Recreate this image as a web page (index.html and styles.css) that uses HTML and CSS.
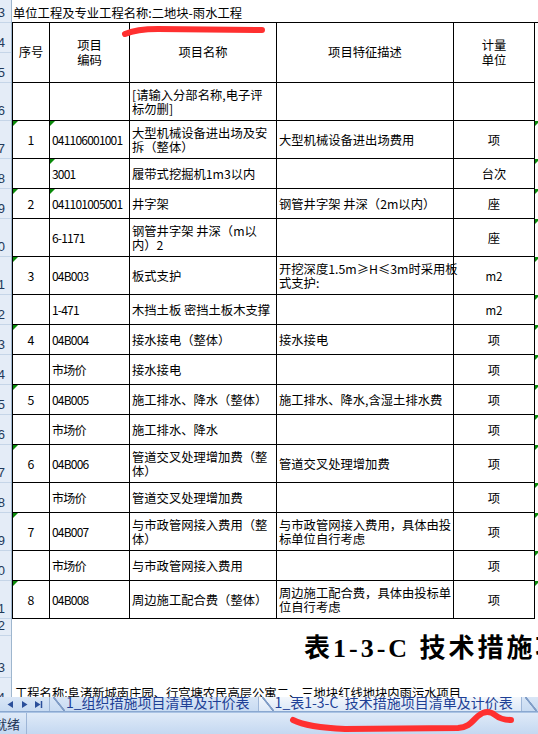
FILE: index.html
```html
<!DOCTYPE html>
<html lang="zh-CN">
<head>
<meta charset="utf-8">
<title>表1-3-C 技术措施项目清单及计价表</title>
<link rel="stylesheet" href="styles.css">
</head>
<body>
<div class="app">
  <div class="sheet">
    <div class="rowhdr">
      <div class="rh h23"><span>3</span></div>
      <div class="rh h30"><span>4</span></div>
      <div class="rh h30"><span>5</span></div>
      <div class="rh h38"><span>6</span></div>
      <div class="rh h38"><span>7</span></div>
      <div class="rh h30"><span>8</span></div>
      <div class="rh h30"><span>9</span></div>
      <div class="rh h38"><span>10</span></div>
      <div class="rh h38"><span>11</span></div>
      <div class="rh h30"><span>12</span></div>
      <div class="rh h30"><span>13</span></div>
      <div class="rh h30"><span>14</span></div>
      <div class="rh h30"><span>15</span></div>
      <div class="rh h30"><span>16</span></div>
      <div class="rh h38"><span>17</span></div>
      <div class="rh h30"><span>18</span></div>
      <div class="rh h38"><span>19</span></div>
      <div class="rh h30"><span>20</span></div>
      <div class="rh h38"><span>21</span></div>
      <div class="rh h17"><span>22</span></div>
      <div class="rh h42"><span>23</span></div>
      <div class="rh h30"><span>24</span></div>
    </div>
    <div class="main">
      <div class="title">单位工程及专业工程名称:二地块-雨水工程</div>
      <div class="grid">
        <div class="c hd">序号</div>
        <div class="c hd">项目<br>编码</div>
        <div class="c hd">项目名称</div>
        <div class="c hd">项目特征描述</div>
        <div class="c hd">计量<br>单位</div>
        <div class="f"></div>

        <div class="c r38"></div>
        <div class="c code"></div>
        <div class="c txt">[请输入分部名称,电子评<br>标勿删]</div>
        <div class="c txt"></div>
        <div class="c unit"></div>
        <div class="f"></div>

        <div class="c r38 seq tri">1</div>
        <div class="c code tri">041106001001</div>
        <div class="c txt">大型机械设备进出场及安<br>拆（整体）</div>
        <div class="c txt">大型机械设备进出场费用</div>
        <div class="c unit">项</div>
        <div class="f tri"></div>

        <div class="c r30"></div>
        <div class="c code tri">3001</div>
        <div class="c txt">履带式挖掘机1m3以内</div>
        <div class="c txt"></div>
        <div class="c unit">台次</div>
        <div class="f tri"></div>

        <div class="c r30 seq tri">2</div>
        <div class="c code tri">041101005001</div>
        <div class="c txt">井字架</div>
        <div class="c txt">钢管井字架 井深（2m以内）</div>
        <div class="c unit">座</div>
        <div class="f tri"></div>

        <div class="c r38"></div>
        <div class="c code">6-1171</div>
        <div class="c txt">钢管井字架 井深（m以<br>内）2</div>
        <div class="c txt"></div>
        <div class="c unit">座</div>
        <div class="f tri"></div>

        <div class="c r38 seq tri">3</div>
        <div class="c code">04B003</div>
        <div class="c txt">板式支护</div>
        <div class="c txt">开挖深度1.5m≥H≤3m时采用板<br>式支护:</div>
        <div class="c unit sm">m2</div>
        <div class="f tri"></div>

        <div class="c r30"></div>
        <div class="c code">1-471</div>
        <div class="c txt">木挡土板 密挡土板木支撑</div>
        <div class="c txt"></div>
        <div class="c unit sm">m2</div>
        <div class="f tri"></div>

        <div class="c r30 seq tri">4</div>
        <div class="c code">04B004</div>
        <div class="c txt">接水接电（整体）</div>
        <div class="c txt">接水接电</div>
        <div class="c unit">项</div>
        <div class="f tri"></div>

        <div class="c r30"></div>
        <div class="c code">市场价</div>
        <div class="c txt">接水接电</div>
        <div class="c txt"></div>
        <div class="c unit">项</div>
        <div class="f tri"></div>

        <div class="c r30 seq tri">5</div>
        <div class="c code">04B005</div>
        <div class="c txt">施工排水、降水（整体）</div>
        <div class="c txt">施工排水、降水,含湿土排水费</div>
        <div class="c unit">项</div>
        <div class="f tri"></div>

        <div class="c r30"></div>
        <div class="c code">市场价</div>
        <div class="c txt">施工排水、降水</div>
        <div class="c txt"></div>
        <div class="c unit">项</div>
        <div class="f tri"></div>

        <div class="c r38 seq tri">6</div>
        <div class="c code">04B006</div>
        <div class="c txt">管道交叉处理增加费（整<br>体）</div>
        <div class="c txt">管道交叉处理增加费</div>
        <div class="c unit">项</div>
        <div class="f tri"></div>

        <div class="c r30"></div>
        <div class="c code">市场价</div>
        <div class="c txt">管道交叉处理增加费</div>
        <div class="c txt"></div>
        <div class="c unit">项</div>
        <div class="f tri"></div>

        <div class="c r38 seq tri">7</div>
        <div class="c code">04B007</div>
        <div class="c txt">与市政管网接入费用（整<br>体）</div>
        <div class="c txt">与市政管网接入费用，具体由投<br>标单位自行考虑</div>
        <div class="c unit">项</div>
        <div class="f tri"></div>

        <div class="c r30"></div>
        <div class="c code">市场价</div>
        <div class="c txt">与市政管网接入费用</div>
        <div class="c txt"></div>
        <div class="c unit">项</div>
        <div class="f tri"></div>

        <div class="c r38 seq tri">8</div>
        <div class="c code">04B008</div>
        <div class="c txt">周边施工配合费（整体）</div>
        <div class="c txt">周边施工配合费，具体由投标单<br>位自行考虑</div>
        <div class="c unit">项</div>
        <div class="f tri"></div>
      </div>
      <div class="gaprow"></div>
      <div class="bigtitle">表1-3-C&nbsp;技术措施项目清单及计价表</div>
      <div class="projline">工程名称:阜渚新城南庄园、行宫塘农民高层公寓二、三地块红线地块内雨污水项目</div>
    </div>
  </div>
  <div class="tabs">
    <div class="nav">
      <svg width="48" height="15" viewBox="0 0 48 15">
        <path d="M13 4l-5.5 3.5 5.5 3.5z" fill="#2b4f9a"/>
        <path d="M22 4l5.5 3.5-5.5 3.5z" fill="#2b4f9a"/>
        <path d="M35 4l5.5 3.5-5.5 3.5z" fill="#2b4f9a"/>
        <path d="M41.5 4v7" stroke="#2b4f9a" stroke-width="1.5"/>
      </svg>
    </div>
    <div class="tab">1_组织措施项目清单及计价表</div>
    <div class="tab active">1_表1-3-C&nbsp;&nbsp;技术措施项目清单及计价表</div>
    <div class="tab">2_</div>
  </div>
  <div class="status">
    <div class="ready">就绪</div>
    <div class="statfill"></div>
  </div>
  <svg class="marks" width="538" height="734" viewBox="0 0 538 734">
    <path d="M125 34 C 134 30, 143 29, 158 29 L 262 30" fill="none" stroke="#ff3030" stroke-width="6" stroke-linecap="round"/>
    <path d="M293 720 C 305 726, 322 728, 345 729 L 458 728 C 470 727, 472 721, 478 716 C 484 711, 490 711, 495 715 C 500 719, 505 720, 511 720" fill="none" stroke="#ff3030" stroke-width="6" stroke-linecap="round"/>
  </svg>
</div>
</body>
</html>
```

FILE: styles.css
```css
* { box-sizing: border-box; }
html, body {
  margin: 0;
  padding: 0;
  width: 538px;
  height: 734px;
  overflow: hidden;
  background: #fff;
}
body {
  font-family: "Noto Sans CJK SC", "Liberation Sans", sans-serif;
  font-size: 12px;
  color: #000;
}
.app {
  position: relative;
  width: 538px;
  height: 734px;
  display: flex;
  flex-direction: column;
}
.sheet {
  height: 697px;
  display: flex;
  overflow: hidden;
}
.rowhdr {
  width: 12px;
  flex: none;
  background: #e4ecf7;
  border-right: 1px solid #9eb6ce;
}
.rh {
  display: flex;
  justify-content: flex-end;
  align-items: flex-end;
  overflow: hidden;
  padding: 0 6px 3px 0;
  border-bottom: 1px solid #c5d5e8;
  font-family: "Liberation Sans", sans-serif;
  font-size: 13px;
  line-height: 13px;
  color: #22395a;
}
.h17 { height: 17px; }
.h23 { height: 23px; }
.h30 { height: 30px; }
.h38 { height: 38px; }
.h42 { height: 42px; }
.main {
  flex: 1;
  min-width: 0;
  overflow: hidden;
}
.title {
  height: 22px;
  padding: 6px 0 0 1px;
  line-height: 15px;
  font-size: 12.3px;
  white-space: nowrap;
}
.grid {
  display: grid;
  grid-template-columns: 38px 80px 147px 177px 81px 20px;
  grid-template-rows: 60px;
  grid-auto-rows: auto;
  border-top: 1px solid #000;
  width: 543px;
}
.c {
  position: relative;
  border-right: 1px solid #000;
  border-bottom: 1px solid #000;
  display: flex;
  align-items: center;
  line-height: 14px;
  font-size: 12.3px;
  white-space: nowrap;
}
.c:nth-child(6n+1) {
  border-left: 1px solid #000;
}
.f {
  position: relative;
}
.hd {
  justify-content: center;
  text-align: center;
  line-height: 15px;
}
.r30 { height: 30px; }
.r38 { height: 38px; }
.seq {
  justify-content: center;
}
.code {
  padding-left: 2px;
  font-size: 12px;
  letter-spacing: -0.8px;
}
.txt {
  padding-left: 2px;
}
.unit {
  justify-content: center;
}
.sm {
  font-size: 11.5px;
}
.tri::before {
  content: "";
  position: absolute;
  left: 0;
  top: 0;
  width: 5px;
  height: 5px;
  background: #0a8a0a;
  clip-path: polygon(0 0, 100% 0, 0 100%);
}
.gaprow { height: 16px; }
.bigtitle {
  height: 42px;
  padding: 0 0 0 292px;
  font-family: "Liberation Serif", "Noto Sans CJK SC", serif;
  font-weight: bold;
  font-size: 26px;
  letter-spacing: 3px;
  line-height: 28px;
  white-space: nowrap;
}
.projline {
  padding: 9px 0 0 3px;
  font-size: 12.3px;
  line-height: 14px;
  white-space: nowrap;
}
.tabs {
  height: 15px;
  display: flex;
  align-items: stretch;
  background: linear-gradient(#d9e6f6, #c8dbf2);
  border-bottom: 1px solid #8aa8d0;
  overflow: hidden;
}
.nav {
  width: 50px;
  flex: none;
  border-right: 1px solid #9db5d6;
}
.nav svg { display: block; }
.tab {
  position: relative;
  padding: 0 8px 0 16px;
  font-size: 14px;
  line-height: 11px;
  color: #1d3f95;
  white-space: nowrap;
  border-right: 1px solid #9fb7d8;
}
.tab::before {
  content: "";
  position: absolute;
  left: 3px;
  top: 0;
  width: 12px;
  height: 15px;
  background: linear-gradient(to top right, transparent 45%, #7f9cc6 48%, #7f9cc6 55%, transparent 58%);
}
.tab.active {
  background: linear-gradient(#f3f7fc, #dce8f7);
}
.status {
  height: 22px;
  display: flex;
  background: linear-gradient(#dfeaf8, #c4d8f1);
  border-top: 1px solid #aac3e4;
}
.ready {
  width: 27px;
  padding: 3px 0 0 0;
  text-indent: -6px;
  overflow: hidden;
  white-space: nowrap;
  font-size: 13px;
  line-height: 16px;
  color: #1f3555;
  border-right: 1px solid #9db5d6;
}
.statfill { flex: 1; }
.marks {
  position: absolute;
  left: 0;
  top: 0;
  pointer-events: none;
}
```
